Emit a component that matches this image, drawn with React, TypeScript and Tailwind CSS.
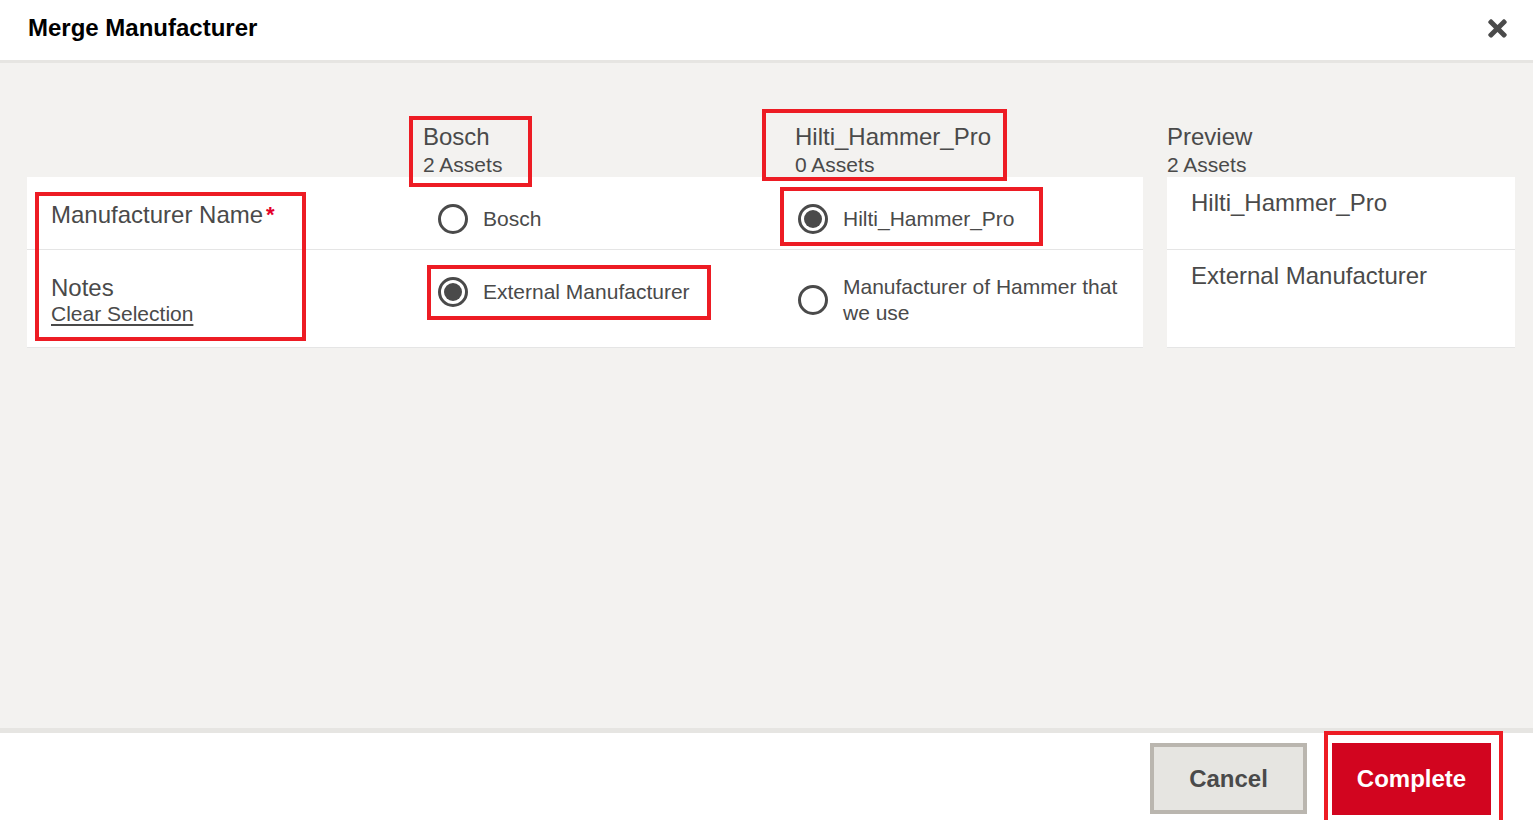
import { FaTimes } from 'react-icons/fa';

const font = { fontFamily: '"Liberation Sans", Arial, sans-serif' };

function Radio({ checked }: { checked?: boolean }) {
    return (
        <span className="w-[30px] h-[30px] shrink-0 rounded-full border-[3px] border-[#4a4a4a] bg-white flex items-center justify-center">
            {checked && <span className="w-[18px] h-[18px] rounded-full bg-[#4a4a4a]" />}
        </span>
    );
}

function Option({ label, checked }: { label: string; checked?: boolean }) {
    return (
        <label className="flex items-center gap-[15px] min-h-[36px] cursor-pointer">
            <Radio checked={checked} />
            <span className="text-[21px] leading-[26px] text-[#4a4a4a]">{label}</span>
        </label>
    );
}

function ColHead({ title, sub }: { title: string; sub: string }) {
    return (
        <div>
            <div className="text-[24px] leading-[28px] text-[#4a4a4a]">{title}</div>
            <div className="mt-[2px] text-[21px] leading-[24px] text-[#4a4a4a]">{sub}</div>
        </div>
    );
}

// red annotation boxes that sit over the screenshot
function Mark({ className }: { className: string }) {
    return <div className={`absolute border-[4px] border-[#ed1c24] pointer-events-none ${className}`} />;
}

export default function App() {
    return (
        <div className="relative w-[1533px] h-[820px] overflow-hidden bg-white flex flex-col" style={font}>
            {/* Header */}
            <div className="h-[63px] shrink-0 flex items-center justify-between pl-[28px] pr-[22px] pb-[4px] border-b-[3px] border-[#e6e5e2]">
                <h1 className="text-[24px] font-bold text-black">Merge Manufacturer</h1>
                <button className="text-[#4a4a4a]">
                    <FaTimes size={27} />
                </button>
            </div>

            {/* Body */}
            <div className="h-[665px] shrink-0 bg-[#f3f2f0] flex pl-[27px] gap-[24px]">
                {/* Table */}
                <div className="w-[1116px]">
                    <div className="h-[114px] pt-[60px] grid grid-cols-[396px_372px_348px]">
                        <div />
                        <ColHead title="Bosch" sub="2 Assets" />
                        <ColHead title="Hilti_Hammer_Pro" sub="0 Assets" />
                    </div>
                    <div className="bg-white">
                        <div className="h-[73px] border-b border-[#e5e5e5] grid grid-cols-[411px_360px_345px]">
                            <div className="pl-[24px] pt-[24px] text-[24px] leading-[28px] text-[#4a4a4a]">
                                Manufacturer Name<span className="ml-[3px] text-[22px] font-bold align-top text-[#e4002b]">*</span>
                            </div>
                            <div className="pt-[24px]">
                                <Option label="Bosch" />
                            </div>
                            <div className="pt-[24px]">
                                <Option label="Hilti_Hammer_Pro" checked />
                            </div>
                        </div>
                        <div className="h-[98px] border-b border-[#e5e5e5] grid grid-cols-[411px_360px_345px]">
                            <div className="pl-[24px] pt-[24px]">
                                <div className="text-[24px] leading-[28px] text-[#4a4a4a]">Notes</div>
                                <a className="block text-[21px] leading-[24px] text-[#4a4a4a] underline underline-offset-[3px] cursor-pointer">
                                    Clear Selection
                                </a>
                            </div>
                            <div className="pt-[24px]">
                                <Option label="External Manufacturer" checked />
                            </div>
                            <div className="pt-[24px] pr-[12px]">
                                <Option label="Manufacturer of Hammer that we use" />
                            </div>
                        </div>
                    </div>
                </div>

                {/* Preview */}
                <div className="w-[348px]">
                    <div className="h-[114px] pt-[60px]">
                        <ColHead title="Preview" sub="2 Assets" />
                    </div>
                    <div className="bg-white">
                        <div className="h-[73px] border-b border-[#e5e5e5] pl-[24px] pt-[12px] text-[24px] leading-[28px] text-[#4a4a4a]">
                            Hilti_Hammer_Pro
                        </div>
                        <div className="h-[98px] border-b border-[#e5e5e5] pl-[24px] pt-[12px] text-[24px] leading-[28px] text-[#4a4a4a]">
                            External Manufacturer
                        </div>
                    </div>
                </div>
            </div>

            {/* Footer */}
            <div className="flex-1 border-t-[5px] border-[#e6e5e2] flex justify-end items-start pt-[10px] pr-[42px] gap-[25px]">
                <button className="w-[157px] h-[71px] border-[4px] border-[#bab6af] bg-[#e6e5e1] text-[24px] font-bold text-[#4a4a4a]">
                    Cancel
                </button>
                <button className="w-[159px] h-[72px] bg-[#d2051f] text-[24px] font-bold text-white">
                    Complete
                </button>
            </div>

            <Mark className="left-[409px] top-[116px] w-[123px] h-[71px]" />
            <Mark className="left-[762px] top-[109px] w-[245px] h-[72px]" />
            <Mark className="left-[35px] top-[192px] w-[271px] h-[149px]" />
            <Mark className="left-[780px] top-[187px] w-[263px] h-[59px]" />
            <Mark className="left-[427px] top-[265px] w-[284px] h-[55px]" />
            <Mark className="left-[1324px] top-[731px] w-[179px] h-[93px]" />
        </div>
    );
}
